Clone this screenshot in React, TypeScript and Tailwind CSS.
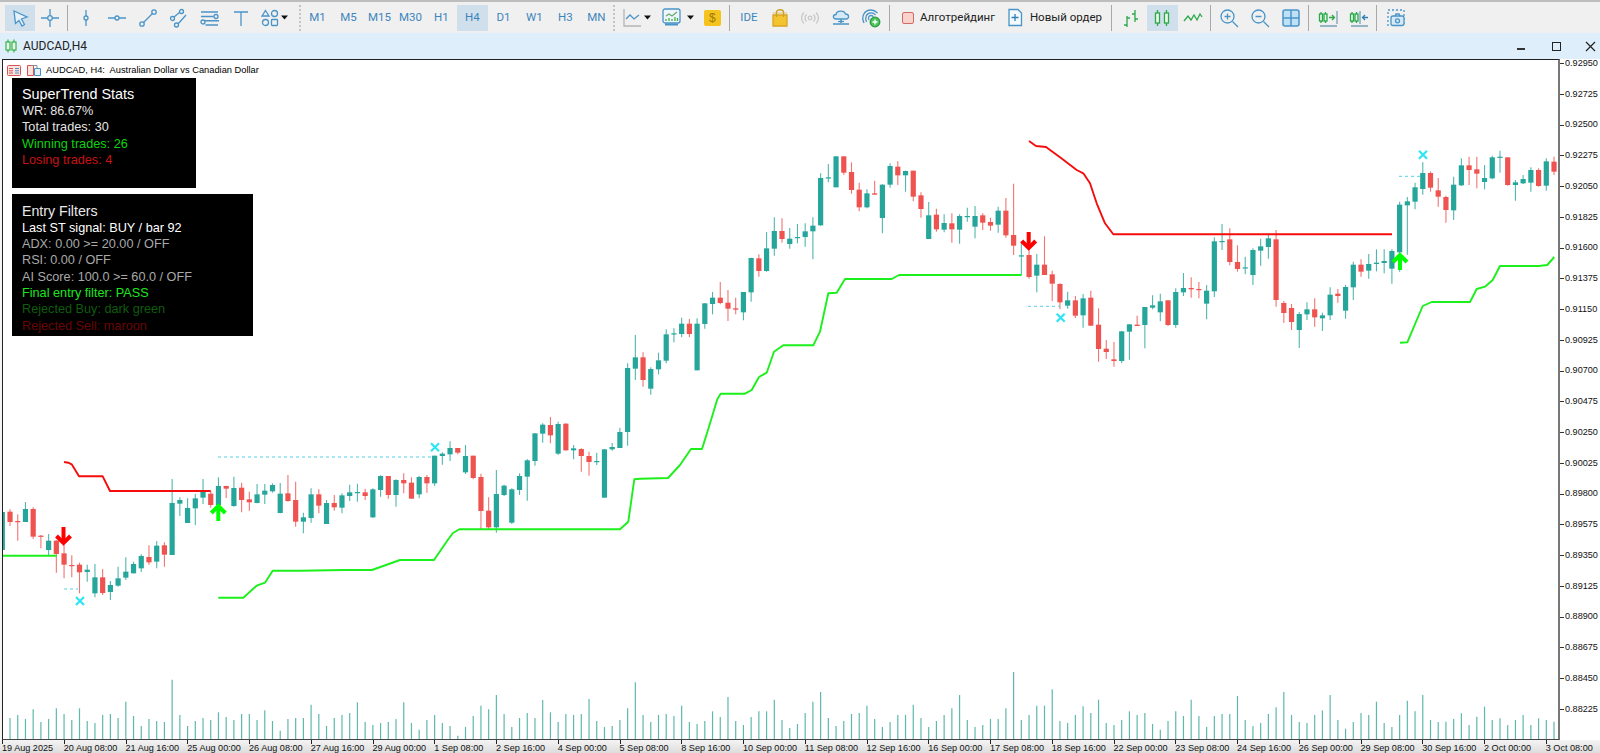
import React from "react";

type R = [number, number, number, number, number];
const X = (k: number) => 2.3 + 7.72 * k;
const T = "#26a69a";
const D = "#ef5350";

const seg = (oy: number, start: number, rows: R[]) =>
  rows.map((r, i) => ({ x: X(start + i), wt: oy + r[0] / 3, bt: oy + r[1] / 3, bb: oy + r[2] / 3, wb: oy + r[3] / 3, up: r[4] === 1 }));

const candles = [
  ...seg(420, 0, [
    [276,276,390,390,1],[268,275,306,318,0],[283,303,305,362,0],[246,267,306,306,1],[262,267,350,357,0],[345,347,350,385,0],[342,362,390,408,1],[360,362,402,458,0],[375,400,434,475,0],[406,435,438,472,0],
    [428,434,457,520,0],[434,449,456,485,1],[432,472,520,532,1],[447,472,519,525,0],[483,495,516,540,1],[440,475,497,500,1],[412,455,473,480,1],[425,432,460,460,1],[403,408,445,456,1],[376,411,427,434,0],
    [363,377,425,445,1],[367,376,404,440,0],[177,249,405,405,1],[232,240,251,288,1],[235,264,309,309,1],[222,235,265,315,1],[177,215,233,252,1],[212,221,255,263,0],[172,198,255,255,1],[197,198,206,234,0],
    [170,204,258,260,1],[188,203,240,277,0],[215,238,247,272,0],[192,223,249,250,1],[192,212,224,252,1],[190,195,214,218,1],[189,221,279,280,1],[165,220,243,245,0],[185,240,305,320,0],
  ]),
  ...seg(400, 39, [
    [338,352,365,400,1],[265,283,354,368,1],[268,283,317,340,0],[300,309,372,372,1],[285,309,322,332,0],[280,286,323,340,1],[254,277,288,303,1],[251,276,278,305,1],[266,277,288,300,0],[265,268,352,354,1],
    [226,228,270,290,1],[228,228,285,296,0],[238,240,285,320,1],[220,240,250,280,0],[232,248,296,296,0],[228,231,283,295,1],[225,231,250,278,0],[167,167,250,258,1],[157,161,168,194,1],[124,144,163,183,1],
    [144,144,158,163,0],[135,168,217,222,1],[167,167,234,238,0],[221,231,333,390,0],[292,332,382,390,0],[210,282,382,398,1],[254,257,285,288,1],[265,268,368,372,1],[220,228,270,285,1],[177,181,230,302,1],
    [100,100,183,197,1],[70,74,101,128,1],[51,75,106,130,0],[65,72,161,165,1],[70,71,151,152,0],[135,145,151,178,1],[145,147,168,215,0],[155,168,186,227,0],[158,183,185,195,1],[147,148,293,293,1],
    [129,141,148,152,1],[83,96,144,144,1],
  ]),
  ...seg(130, 81, [
    [700,714,906,947,1],[615,682,716,750,1],[667,682,750,770,0],[712,717,776,794,1],[668,691,718,733,1],[598,613,692,700,1],[595,610,613,637,1],[563,581,612,622,1],[567,581,612,622,0],[565,581,721,721,1],
    [519,520,582,596,1],[486,503,522,553,1],[456,503,519,523,0],[480,518,536,573,0],[503,535,539,553,0],[486,486,547,571,1],[383,384,487,515,1],[373,385,423,440,0],[306,355,423,425,1],[262,303,356,377,1],
    [265,303,327,338,0],[294,326,342,356,1],[282,321,324,340,1],[280,304,321,350,1],[262,287,304,388,1],[130,144,286,287,1],[102,142,145,157,1],[79,79,172,172,1],[79,79,128,134,0],[97,126,180,191,0],
    [158,179,232,244,0],[178,190,232,235,1],[152,190,194,194,0],[163,164,264,310,1],[100,108,164,173,1],[94,110,136,165,0],[122,123,136,185,1],[122,122,200,214,0],[187,196,237,263,0],[216,256,327,327,1],[236,254,298,305,0],
  ]),
  ...seg(170, 122, [
    [133,159,179,187,1],[130,160,178,218,0],[133,138,179,221,1],[113,138,141,155,1],[108,138,170,205,1],[130,136,158,180,0],[143,156,167,182,0],[110,122,164,188,1],[84,122,196,203,0],[41,195,227,255,0],
    [213,256,258,315,1],[210,255,321,326,0],[252,284,317,367,1],[199,284,315,315,0],[302,313,341,393,0],[340,342,397,418,0],[365,391,407,416,1],[378,391,437,444,0],[372,385,436,473,1],[362,383,467,468,0],
    [415,464,537,575,0],[510,536,546,567,0],[516,568,573,590,0],[483,484,573,580,1],[462,463,485,569,1],[437,464,468,468,0],[411,411,465,535,1],[376,406,413,418,1],[371,394,427,454,1],[391,391,465,468,0],
    [355,366,465,473,1],[309,354,367,378,1],[322,354,358,383,0],[336,357,359,385,0],[345,362,401,448,1],[202,214,364,381,1],[162,213,216,240,1],[175,208,276,286,0],[226,276,297,305,0],[260,292,294,313,1],
    [235,240,315,345,1],[206,229,242,287,1],[195,205,231,266,1],[180,208,390,410,0],
  ]),
  ...seg(0, 166, [
    [903,909,939,969,0],[912,924,966,990,0],[936,942,990,1044,1],
  ]),
  ...seg(130, 169, [
    [517,538,553,570,1],[505,538,562,590,0],[548,556,565,603,1],[472,494,556,570,1],[477,491,498,518,0],[465,471,542,566,1],[395,404,472,510,1],[388,404,425,440,0],[372,402,422,446,1],[358,398,402,424,1],
    [358,393,399,430,1],[358,363,416,461,1],[215,224,367,425,1],[201,214,226,374,1],[158,172,215,238,1],[97,129,177,194,1],[124,129,173,185,0],[144,181,200,230,0],[197,201,240,278,0],[140,164,241,270,1],
    [85,106,166,168,1],[80,106,120,165,0],[80,118,131,175,0],[105,144,156,178,1],[77,82,145,148,1],[62,80,82,128,1],[82,82,165,167,0],[150,157,165,212,1],[135,147,160,162,1],[112,120,158,185,1],
    [115,120,168,170,0],[85,94,167,182,1],[80,95,125,135,0],
  ]),
];

const volumes = [
  204,195,207,178,216,207,175,192,210,175,213,219,195,192,204,155,198,228,207,213,216,89,195,228,213,204,210,187,201,210,192,192,210,181,213,242,207,204,204,164,192,228,204,195,189,157,216,225,219,216,207,
  157,219,239,210,195,219,228,257,231,198,167,178,135,192,231,204,189,204,150,187,216,192,195,192,147,213,231,228,210,175,97,195,216,195,192,198,167,216,222,213,184,201,141,213,225,201,184,184,149,210,234,222,189,155,126,204,228,213,192,189,167,207,231,216,195,195,164,
  204,231,213,195,175,135,210,231,225,207,207,175,66,210,195,167,167,118,213,219,195,169,189,149,219,225,210,184,195,189,222,239,213,184,198,149,198,231,198,192,192,138,210,228,219,192,172,126,195,216,219,195,181,135,210,236,216,189,195,155,219,231,195,152,184,135,210,216,
  215,207,190,225,200,170,210,205,225,210,195,225,205,210,215,
];

const pts = (ox: number, oy: number, list: number[][]) => list.map(([a, b]) => `${(ox + a / 3).toFixed(1)},${(oy + b / 3).toFixed(1)}`).join(" ");

const red1 = pts(0, 420, [[192,126],[205,128],[215,133],[237,169],[308,169],[330,213],[632,213]]);
const green0 = "3,555.7 56.7,555.7";
const green1 = [
  pts(0, 420, [[655,533],[730,533],[770,497],[795,488],[818,452],[900,452]]),
  "344,570 372,570 400,560 434,560",
  pts(300, 400, [[445,418],[458,400],[478,388],[960,388],[985,365],[1003,238],[1020,236]]),
  "668,478 680,465 691,449 702,449 708,430",
  pts(600, 130, [[352,808],[362,791],[435,791],[455,780],[477,741],[500,728],[522,665],[550,646],[640,646],[660,605],[685,490],[710,488],[735,447],[875,447],[897,435],[1020,435]]),
  "1021.7,275",
].join(" ");
const red2 = "1029,141 1036,146 1046,147 1061,158 " + pts(940, 170, [[410,0],[430,10],[450,40],[470,100],[495,160],[520,193]]) + " 1392,234.3";
const green2 = pts(1300, 130, [[300,638],[322,637],[368,528],[395,516],[510,516],[530,477],[555,470],[578,450],[600,408],[716,408],[742,405],[763,381]]);

const dashes = [
  [218, 433, 457],
  [64, 78, 589],
  [1028, 1060, 306.3],
  [1399, 1420, 176.3],
];
const crosses = [
  [80, 601],
  [435, 447.3],
  [1060.7, 317.7],
  [1423, 154.7],
];

const DownArrow = ({ x, y }: { x: number; y: number }) => (
  <g fill="none" stroke="#ff0000" strokeWidth={4}>
    <path d={`M${x} ${y} V${y + 15}`} />
    <path d={`M${x - 7} ${y + 9} L${x} ${y + 16} L${x + 7} ${y + 9}`} />
  </g>
);
const UpArrow = ({ x, y }: { x: number; y: number }) => (
  <g fill="none" stroke="#00ff00" strokeWidth={4}>
    <path d={`M${x} ${y + 17} V${y + 2}`} />
    <path d={`M${x - 7} ${y + 9} L${x} ${y + 2} L${x + 7} ${y + 9}`} />
  </g>
);

const Chart = () => (
  <svg viewBox="3 60 1555 679" className="block h-[679px] w-[1555px]">
    {volumes.map((v, i) => (
      <line key={i} x1={X(i + 1)} x2={X(i + 1)} y1={650 + v / 3} y2={739} stroke="#5fb8ae" strokeWidth={1.2} />
    ))}
    {candles.map((c, i) => (
      <g key={i} fill={c.up ? T : D} stroke="none">
        <line x1={c.x} x2={c.x} y1={c.wt} y2={c.wb} stroke={c.up ? T : D} strokeWidth={1.1} opacity={0.8} />
        <rect x={c.x - 2.6} y={c.bt} width={5.2} height={Math.max(c.bb - c.bt, 1.2)} />
      </g>
    ))}
    {[green0, green1, green2].map((p, i) => (
      <polyline key={i} points={p} fill="none" stroke="#1cf01c" strokeWidth={1.9} strokeLinejoin="round" />
    ))}
    {[red1, red2].map((p, i) => (
      <polyline key={i} points={p} fill="none" stroke="#f50d0d" strokeWidth={1.9} strokeLinejoin="round" />
    ))}
    {dashes.map(([a, b, y], i) => (
      <line key={i} x1={a} x2={b} y1={y} y2={y} stroke="#55cfe8" strokeWidth={1} strokeDasharray="3 3" />
    ))}
    {crosses.map(([x, y], i) => (
      <path key={i} d={`M${x - 4} ${y - 4} L${x + 4} ${y + 4} M${x + 4} ${y - 4} L${x - 4} ${y + 4}`} stroke="#2fe4f6" strokeWidth={2.2} fill="none" />
    ))}
    <DownArrow x={63.5} y={527} />
    <DownArrow x={1028.7} y={232} />
    <UpArrow x={218.3} y={504} />
    <UpArrow x={1400} y={253} />
  </svg>
);

const B = "#4a94c8";

const Ic = ({ children, w = 20, h = 20 }: { children: React.ReactNode; w?: number; h?: number }) => (
  <svg width={w} height={h} viewBox={`0 0 ${w} ${h}`} fill="none" stroke={B} strokeWidth={1.3}>
    {children}
  </svg>
);
const Caret = () => (
  <svg width="7" height="5" viewBox="0 0 7 5"><path d="M0 0.5H7L3.5 4.5Z" fill="#111" /></svg>
);
const Cell = ({ children, className = "w-[31px]" }: { children?: React.ReactNode; className?: string }) => (
  <div className={`flex h-[26px] shrink-0 items-center justify-center ${className}`}>{children}</div>
);
const Sep = ({ className = "w-[4px]" }: { className?: string }) => (
  <div className={`flex h-[26px] shrink-0 justify-center ${className}`}>
    <div className="h-full w-px bg-[#a8a8a8]" />
  </div>
);
const Dotted = ({ className = "w-[4px]" }: { className?: string }) => (
  <div className={`flex h-[26px] shrink-0 justify-center ${className}`}>
    <div className="h-full w-0 border-l-2 border-dotted border-[#c4c4c4]" />
  </div>
);
const Period = ({ t, active }: { t: string; active?: boolean }) => (
  <div className={`flex h-[26px] w-[31px] shrink-0 items-center justify-center text-[11.5px] text-[#3d85bd] ${active ? "bg-[#cfdfeb]" : ""}`}>{t}</div>
);

const GreenCandle = ({ x, y = 5, h = 10 }: { x: number; y?: number; h?: number }) => (
  <g stroke="#2aa84a">
    <path d={`M${x} ${y - 3} V${y + h + 3}`} />
    <rect x={x - 2} y={y} width={4} height={h} fill="#eafbe9" />
  </g>
);

const Toolbar = () => (
  <div className="flex h-[33px] shrink-0 items-center border-t-2 border-[#bdbdbd] bg-[#f0f0f0] pl-[4.6px] font-['Roboto',sans-serif]">
    <Cell className="w-[30px] bg-[#cfdfeb]">
      <Ic><path d="M4 3L17 9L11.5 11L14.5 16.5L12 18L9 12.5L5.5 15.5Z" fill="#e8f2fa" /></Ic>
    </Cell>
    <Cell className="w-[30px]">
      <Ic><path d="M1 10H7.5M12.5 10H19M10 1V7.5M10 12.5V19" /><circle cx="10" cy="10" r="2.3" /></Ic>
    </Cell>
    <Sep className="w-[6.3px]" />
    <Cell>
      <Ic><path d="M10 2V8M10 12V18" /><circle cx="10" cy="10" r="2" /></Ic>
    </Cell>
    <Cell>
      <Ic><path d="M1 10H8M12 10H19" /><circle cx="10" cy="10" r="2" /></Ic>
    </Cell>
    <Cell>
      <Ic><path d="M5.5 14.5L14.5 5.5" /><circle cx="4" cy="16" r="2.2" /><circle cx="16" cy="4" r="2.2" /></Ic>
    </Cell>
    <Cell>
      <Ic><path d="M5 9L10.5 4.5M9 16L17 7" /><circle cx="12.5" cy="3.5" r="2" /><circle cx="3.5" cy="10.5" r="2" /><circle cx="7.5" cy="17" r="2" /></Ic>
    </Cell>
    <Cell>
      <Ic><path d="M1 4H18M1 8.5H13.5M4 12.8H19M5.5 17H18" strokeWidth={1.5} /><circle cx="16" cy="8.5" r="2" /><circle cx="3" cy="14" r="2" /></Ic>
    </Cell>
    <Cell>
      <Ic><path d="M3 4H17M10 4V18" /></Ic>
    </Cell>
    <div className="flex h-[26px] w-[41px] shrink-0 items-center">
      <div className="ml-[3px] mr-[1px]">
        <Ic><path d="M5.5 2.5L9 8H2Z" /><circle cx="14.5" cy="5.5" r="3" /><circle cx="5.5" cy="14.5" r="3" /><rect x="11.5" y="11.5" width="6" height="6" rx="0.8" /></Ic>
      </div>
      <Caret />
    </div>
    <Dotted />
    {["M1", "M5", "M15", "M30", "H1"].map((t) => <Period key={t} t={t} />)}
    <Period t="H4" active />
    {["D1", "W1", "H3", "MN"].map((t) => <Period key={t} t={t} />)}
    <Dotted />
    <div className="flex h-[26px] w-[40px] shrink-0 items-center">
      <div className="ml-[7px] mr-[2px]">
        <Ic w={19} h={19}><path d="M1 1V18H18" stroke="#b5b5b5" /><path d="M3 11L7 7L11 11L16 7" /></Ic>
      </div>
      <Caret />
    </div>
    <div className="flex h-[26px] w-[40px] shrink-0 items-center">
      <div className="ml-[6px] mr-[6px]">
        <Ic w={19} h={19}>
          <rect x="1" y="1" width="17" height="14" rx="2" fill="#eef6fb" />
          <path d="M3 16.5H16" strokeWidth={2} />
          <path d="M4 8L7 6L10 8L15 4" stroke="#6aa96a" />
          <path d="M4 13V11M7 13V10M10 13V11M13 13V9M15.5 13V10" stroke="#43b04a" />
        </Ic>
      </div>
      <Caret />
    </div>
    <Cell className="w-[33px]">
      <div className="flex h-[16px] w-[17px] items-center justify-center rounded-[2px] bg-[#f6c21c] font-['Liberation_Sans',sans-serif] text-[12px] text-[#9c7a10]">$</div>
    </Cell>
    <Sep className="w-[2px]" />
    <Cell className="w-[36px]">
      <span className="text-[11.5px] text-[#3d85bd]">IDE</span>
    </Cell>
    <Cell className="w-[26px]">
      <Ic w={16} h={19}><path d="M1 7H15V18H1Z" fill="#f4c430" stroke="#d9a520" /><path d="M4.5 9V4C4.5 1 11.5 1 11.5 4V9" stroke="#c9a027" /><path d="M1 5H15" stroke="#d9a520" opacity="0.5" /></Ic>
    </Cell>
    <Cell className="w-[35px]">
      <Ic><circle cx="10" cy="10" r="1.8" stroke="#c9c9c9" /><path d="M6.5 6.5C4.8 8.5 4.8 11.5 6.5 13.5M13.5 6.5C15.2 8.5 15.2 11.5 13.5 13.5M3.8 4.5C1 8 1 12 3.8 15.5M16.2 4.5C19 8 19 12 16.2 15.5" stroke="#c9c9c9" /></Ic>
    </Cell>
    <Cell className="w-[26px]">
      <Ic w={20} h={19}><path d="M5 11C1.5 11 1.5 6.5 5 6.5C5.5 2 13.5 2 14.5 6C18.5 6 18.5 11 15 11Z" fill="#d5e9f7" /><path d="M10 11V15M2 16H18" strokeWidth={1.6} /><path d="M7 13.5H13" /></Ic>
    </Cell>
    <Cell className="w-[34px]">
      <Ic><path d="M3 15C0 9 3 2 10 2C13 2 15 3.5 16.5 5" /><path d="M5.5 14C3.5 9.5 5.5 4.8 10 4.8C12 4.8 13.5 5.5 14.5 7" /><path d="M8 12C6.8 9.5 8 7.5 10 7.5C11 7.5 12 8 12.3 9" /><circle cx="14" cy="14" r="4.8" fill="#4fc35f" stroke="#2a9d3f" /><path d="M14 11.5V16.5M11.5 14H16.5" stroke="#fff" /></Ic>
    </Cell>
    <Sep className="w-[4px]" />
    <div className="ml-[10px] h-[12px] w-[12px] shrink-0 rounded-[2px] border border-[#d36a62] bg-[#fad2cd]" />
    <span className="ml-[6px] w-[75px] shrink-0 whitespace-nowrap text-[11.5px] text-[#222]">Алготрейдинг</span>
    <div className="ml-[12.5px] shrink-0">
      <Ic w={16} h={19}><path d="M2 1.5H11L14.5 5V17.5H2Z" fill="#f3f9fd" /><path d="M8 6V13M4.5 9.5H11.5" stroke="#2f7fb8" /></Ic>
    </div>
    <span className="ml-[6.5px] w-[80px] shrink-0 whitespace-nowrap text-[11.5px] text-[#222]">Новый ордер</span>
    <Sep className="w-[4px]" />
    <div className="w-[2px] shrink-0" />
    <Cell>
      <Ic><g stroke="#2aa84a"><path d="M6 8V19M3 17H6M6 10H9M14 2V14M11 6H14M14 11H17" /></g></Ic>
    </Cell>
    <Cell className="w-[31px] bg-[#cfdfeb]">
      <Ic><GreenCandle x={5.5} /><GreenCandle x={14.5} /></Ic>
    </Cell>
    <Cell>
      <Ic><path d="M1 13L5 8L8 12L11 7L14 12L17 6L19 9" stroke="#2aa84a" /></Ic>
    </Cell>
    <Sep className="w-[3px]" />
    <div className="w-[2px] shrink-0" />
    <Cell>
      <Ic><circle cx="8.5" cy="8.5" r="6.5" /><path d="M13.5 13.5L19 19M5.5 8.5H11.5M8.5 5.5V11.5" /></Ic>
    </Cell>
    <Cell>
      <Ic><circle cx="8.5" cy="8.5" r="6.5" /><path d="M13.5 13.5L19 19M5.5 8.5H11.5" /></Ic>
    </Cell>
    <Cell>
      <Ic><rect x="2" y="2" width="16" height="16" rx="2" fill="#bfe0f5" strokeWidth={1.5} /><path d="M10 2V18M2 10H18" strokeWidth={1.5} /></Ic>
    </Cell>
    <Sep className="w-[4px]" />
    <div className="w-[1px] shrink-0" />
    <Cell className="w-[32px]">
      <Ic><g stroke="#2aa84a"><path d="M3 4V15M7.5 4V15" /><rect x="1.5" y="6" width="3" height="7" fill="#e5fae5" /><rect x="6" y="6" width="3" height="7" fill="#e5fae5" /><path d="M11 9.5H16M14 7L16.5 9.5L14 12" /></g><path d="M19 3V16M2 18H19" stroke="#7a9fb8" /></Ic>
    </Cell>
    <Cell>
      <Ic><g stroke="#2aa84a"><path d="M3 4V15M7.5 4V15" /><rect x="1.5" y="6" width="3" height="7" fill="#e5fae5" /><rect x="6" y="6" width="3" height="7" fill="#e5fae5" /></g><path d="M11 3V16M2 18H19" stroke="#7a9fb8" /><path d="M19 9.5H14M16 7L13.5 9.5L16 12" stroke="#2f7fb8" /></Ic>
    </Cell>
    <Sep className="w-[3px]" />
    <div className="w-[2px] shrink-0" />
    <Cell className="w-[32px]">
      <Ic><path d="M2 18V2H18V18" strokeDasharray="2 2" /><rect x="5" y="8" width="13" height="9.5" rx="2" fill="#d5e9f7" /><path d="M9 8L10 6H13L14 8" /><circle cx="11.5" cy="12.8" r="2" /></Ic>
    </Cell>
  </div>
);

const TitleBar = () => (
  <div className="flex h-[26px] shrink-0 items-center bg-[#deeefb] pl-[5px] font-['Roboto',sans-serif]">
    <svg width="12" height="14" viewBox="0 0 12 14" fill="none" stroke="#35b34a" strokeWidth="1.2">
      <path d="M3 0.5V13.5M9 0.5V13.5" />
      <rect x="1" y="3" width="4" height="8" fill="#e8f7e8" />
      <rect x="7" y="3" width="4" height="8" fill="#e8f7e8" />
    </svg>
    <span className="ml-[6px] text-[12px] text-[#222]">AUDCAD,H4</span>
    <div className="ml-auto flex items-center gap-[18.6px] pr-[1.4px]">
      <div className="flex h-[26px] w-[16px] items-end justify-center pb-[9px]">
        <div className="h-[2px] w-[8px] bg-[#333]" />
      </div>
      <div className="flex h-[26px] w-[16px] items-center justify-center">
        <div className="h-[9px] w-[9px] border-[1.5px] border-[#222]" />
      </div>
      <div className="flex h-[26px] w-[16px] items-center justify-center">
        <svg width="11" height="11" viewBox="0 0 11 11" stroke="#222" strokeWidth="1.2"><path d="M1 1L10 10M10 1L1 10" /></svg>
      </div>
    </div>
  </div>
);

const Line = ({ children, className }: { children: React.ReactNode; className: string }) => (
  <div className={`h-[16.35px] whitespace-nowrap text-[12.7px] leading-[16.35px] ${className}`}>{children}</div>
);

const Overlay = () => (
  <div className="absolute left-[9px] top-[18px] flex flex-col gap-[6px] font-['Liberation_Sans',sans-serif]">
    <div className="h-[110px] w-[183.5px] bg-black pl-[10px] pt-[8px]">
      <div className="h-[17px] whitespace-nowrap text-[14.4px] leading-[17px] text-white">SuperTrend Stats</div>
      <Line className="text-[#e4e4e4]">WR: 86.67%</Line>
      <Line className="text-[#e4e4e4]">Total trades: 30</Line>
      <Line className="text-[#0fd30f]">Winning trades: 26</Line>
      <Line className="text-[#c81212]">Losing trades: 4</Line>
    </div>
    <div className="h-[142.4px] w-[241px] bg-black pl-[10px] pt-[8.5px]">
      <div className="h-[17px] whitespace-nowrap text-[14.2px] leading-[17px] text-[#e8e8e8]">Entry Filters</div>
      <Line className="text-white">Last ST signal: BUY / bar 92</Line>
      <Line className="text-[#a9a9a9]">ADX: 0.00 {">="} 20.00 / OFF</Line>
      <Line className="text-[#a9a9a9]">RSI: 0.00 / OFF</Line>
      <Line className="text-[#a9a9a9]">AI Score: 100.0 {">="} 60.0 / OFF</Line>
      <Line className="text-[#1ee61e]">Final entry filter: PASS</Line>
      <Line className="text-[#0f5c0f]">Rejected Buy: dark green</Line>
      <Line className="text-[#6a0505]">Rejected Sell: maroon</Line>
    </div>
  </div>
);

const ChartHeader = () => (
  <div className="absolute left-[4px] top-[5px] flex items-center font-['Liberation_Sans',sans-serif]">
    <svg width="14" height="11" viewBox="0 0 14 11" fill="none" strokeWidth="1">
      <rect x="0.5" y="0.5" width="13" height="10" rx="1" fill="#fbe3df" stroke="#d9534f" />
      <path d="M2 3.5H6M2 5.8H6M2 8H6" stroke="#d9534f" />
      <path d="M8 3.5H12M8 5.8H12M8 8H12" stroke="#4a90c8" />
    </svg>
    <svg className="ml-[6px]" width="14" height="11" viewBox="0 0 14 11" fill="none" strokeWidth="1">
      <path d="M0.5 0.5H6.5V10.5H0.5Z" fill="#fbe3df" stroke="#d9534f" />
      <path d="M7.5 3.5H13.5V10.5H7.5Z" fill="#e4f1fa" stroke="#4a90c8" />
      <path d="M4 0.5H10V3" stroke="#8c8c8c" />
    </svg>
    <span className="ml-[5px] whitespace-pre text-[9.3px] leading-none text-black">AUDCAD, H4:  Australian Dollar vs Canadian Dollar</span>
  </div>
);

const prices = Array.from({ length: 22 }, (_, i) => (0.9295 - i * 0.00225).toFixed(5));
const times = ["19 Aug 2025","20 Aug 08:00","21 Aug 16:00","25 Aug 00:00","26 Aug 08:00","27 Aug 16:00","29 Aug 00:00","1 Sep 08:00","2 Sep 16:00","4 Sep 00:00","5 Sep 08:00","8 Sep 16:00","10 Sep 00:00","11 Sep 08:00","12 Sep 16:00","16 Sep 00:00","17 Sep 08:00","18 Sep 16:00","22 Sep 00:00","23 Sep 08:00","24 Sep 16:00","26 Sep 00:00","29 Sep 08:00","30 Sep 16:00","2 Oct 00:00","3 Oct 08:00"];

const PriceAxis = () => (
  <div className="flex h-[681px] flex-1 flex-col overflow-hidden bg-white font-['Liberation_Sans',sans-serif]">
    <div className="-mt-[10.875px]">
      {prices.map((p) => (
        <div key={p} className="flex h-[30.75px] items-center">
          <div className="h-px w-[4px] bg-[#333]" />
          <span className="ml-px text-[9.1px] leading-none text-[#111]">{p}</span>
        </div>
      ))}
    </div>
  </div>
);

const TimeAxis = () => (
  <div className="flex h-[13px] shrink-0 overflow-hidden bg-gradient-to-b from-[#f4f4f4] to-[#dddddd] pl-[2px] font-['Liberation_Sans',sans-serif]">
    {times.map((t) => (
      <div key={t} className="w-[61.75px] shrink-0">
        <div className="h-[3.5px] w-px bg-[#222]" />
        <div className="whitespace-nowrap text-[9.1px] leading-[9.5px] text-[#111]">{t}</div>
      </div>
    ))}
  </div>
);

export default function App() {
  return (
    <div className="flex h-[753px] w-[1600px] flex-col overflow-hidden bg-white">
      <Toolbar />
      <TitleBar />
      <div className="flex h-[681px] shrink-0">
        <div className="w-[2px] shrink-0 bg-[#f4f4f4]" />
        <div className="relative h-[681px] w-[1558px] shrink-0 border-b border-l border-r-[2px] border-t border-b-[#444] border-l-[#222] border-r-[#777] border-t-[#222] bg-white">
          <Chart />
          <ChartHeader />
          <Overlay />
        </div>
        <PriceAxis />
      </div>
      <TimeAxis />
    </div>
  );
}
